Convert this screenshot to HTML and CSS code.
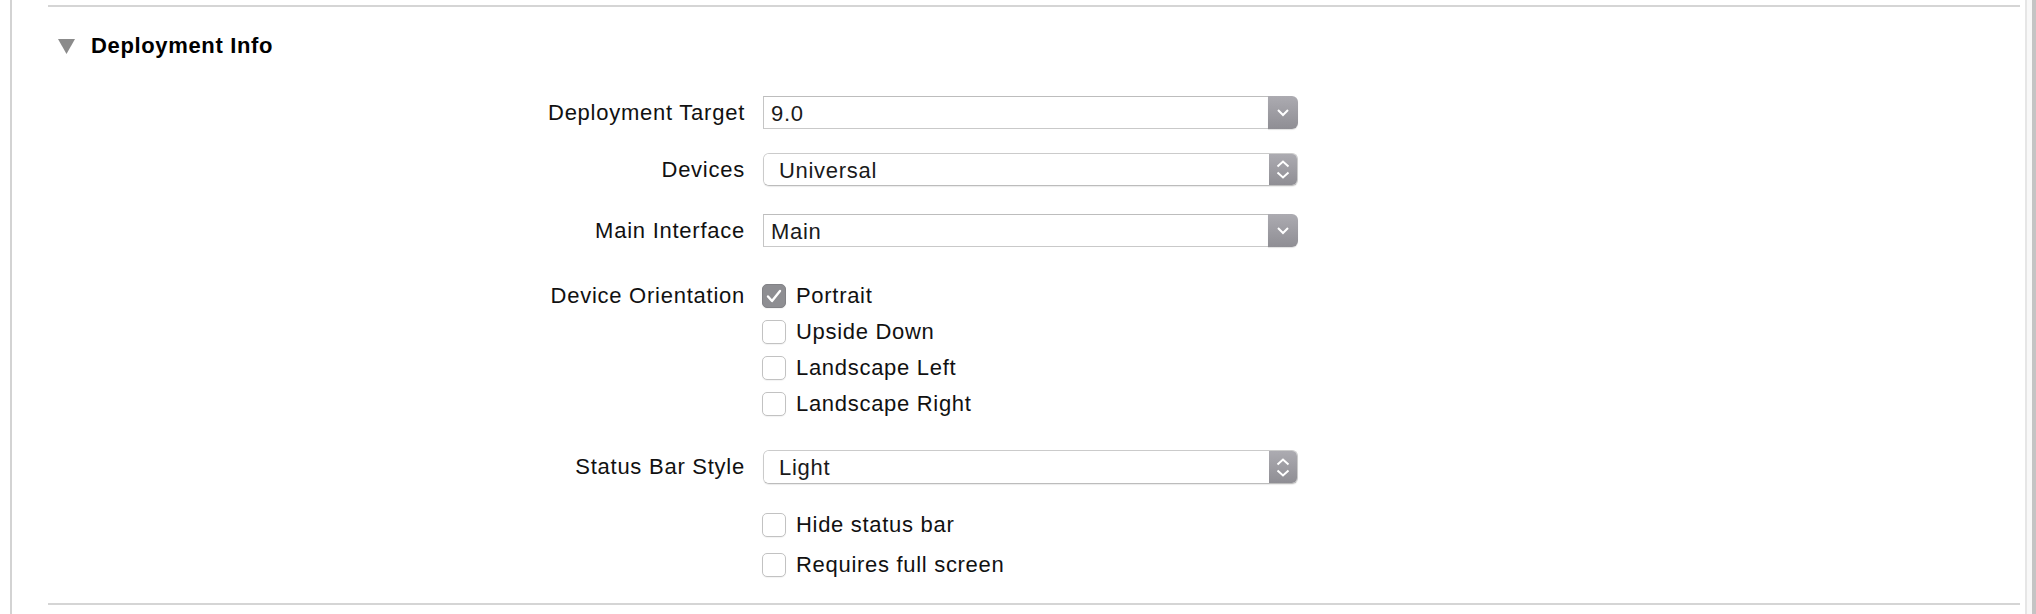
FILE: index.html
```html
<!DOCTYPE html>
<html>
<head>
<meta charset="utf-8">
<link rel="stylesheet" href="styles.css">
</head>
<body>
<div class="page">
  <div class="gutter"></div>
  <div class="main">
    <section class="section">
      <div class="rule"></div>
      <header class="head">
        <svg class="disclosure" width="17" height="15" viewBox="0 0 17 15"><polygon points="0,0 17,0 8.5,15" fill="#8b8b8b"/></svg>
        <h2 class="title">Deployment Info</h2>
      </header>

      <div class="row row-target">
        <div class="label">Deployment Target</div>
        <div class="combo">
          <div class="field">9.0</div>
          <div class="btn combo-btn">
            <svg width="12" height="8" viewBox="0 0 12 8"><polyline points="1,1 6,6 11,1" fill="none" stroke="#fff" stroke-width="2"/></svg>
          </div>
        </div>
      </div>

      <div class="row row-devices">
        <div class="label">Devices</div>
        <div class="popup">
          <div class="field">Universal</div>
          <div class="btn popup-btn">
            <svg width="14" height="19" viewBox="0 0 14 19"><polyline points="1.5,6.5 7,1.5 12.5,6.5" fill="none" stroke="#fff" stroke-width="2"/><polyline points="1.5,12.5 7,17.5 12.5,12.5" fill="none" stroke="#fff" stroke-width="2"/></svg>
          </div>
        </div>
      </div>

      <div class="row row-main">
        <div class="label">Main Interface</div>
        <div class="combo">
          <div class="field">Main</div>
          <div class="btn combo-btn">
            <svg width="12" height="8" viewBox="0 0 12 8"><polyline points="1,1 6,6 11,1" fill="none" stroke="#fff" stroke-width="2"/></svg>
          </div>
        </div>
      </div>

      <div class="row row-orient">
        <div class="label label-top">Device Orientation</div>
        <div class="checks">
          <div class="check"><span class="box checked"><svg width="16" height="14" viewBox="0 0 16 14"><polyline points="2,7.5 6,12 14,2" fill="none" stroke="#fff" stroke-width="2.4" stroke-linecap="round" stroke-linejoin="round"/></svg></span><span>Portrait</span></div>
          <div class="check"><span class="box"></span><span>Upside Down</span></div>
          <div class="check"><span class="box"></span><span>Landscape Left</span></div>
          <div class="check"><span class="box"></span><span>Landscape Right</span></div>
        </div>
      </div>

      <div class="row row-status">
        <div class="label">Status Bar Style</div>
        <div class="popup tall">
          <div class="field">Light</div>
          <div class="btn popup-btn">
            <svg width="14" height="19" viewBox="0 0 14 19"><polyline points="1.5,6.5 7,1.5 12.5,6.5" fill="none" stroke="#fff" stroke-width="2"/><polyline points="1.5,12.5 7,17.5 12.5,12.5" fill="none" stroke="#fff" stroke-width="2"/></svg>
          </div>
        </div>
      </div>

      <div class="row row-extra">
        <div class="label"></div>
        <div class="checks gap-small">
          <div class="check"><span class="box"></span><span>Hide status bar</span></div>
          <div class="check"><span class="box"></span><span>Requires full screen</span></div>
        </div>
      </div>

      <div class="rule rule-bottom"></div>
    </section>
  </div>
  <div class="scroller"></div>
</div>
</body>
</html>
```

FILE: styles.css
```css
html, body {
  margin: 0;
  padding: 0;
  background: #fff;
}

body {
  font-family: "Liberation Sans", Arial, sans-serif;
  color: #111;
}

.page {
  display: flex;
  width: 2036px;
  height: 614px;
  overflow: hidden;
}

.gutter {
  width: 10px;
  border-right: 2px solid #d3d3d3;
  flex: none;
}

.main {
  flex: 1;
  padding: 5px 5px 0 36px;
}

.scroller {
  flex: none;
  width: 5px;
  background: #f8f8f8;
  border-left: 2px solid #e6e6e6;
  border-right: 4px solid #c4c4c4;
}

.rule {
  height: 2px;
  background: #d5d5d5;
}

.head {
  display: flex;
  align-items: center;
  margin-top: 26px;
  height: 26px;
}

.disclosure {
  margin-left: 10px;
  margin-right: 16px;
  flex: none;
}

.title {
  margin: 0;
  font-size: 22px;
  line-height: 26px;
  font-weight: bold;
  letter-spacing: 0.65px;
  color: #000;
}

.row {
  display: grid;
  grid-template-columns: 697px 535px;
  column-gap: 18px;
  align-items: center;
}

.row-target { margin-top: 37px; }
.row-devices { margin-top: 24px; }
.row-main { margin-top: 28px; }
.row-orient { margin-top: 37px; align-items: start; }
.row-status { margin-top: 34px; }
.row-extra { margin-top: 29px; }
.rule-bottom { margin-top: 26px; }

.label {
  text-align: right;
  font-size: 22px;
  letter-spacing: 0.75px;
  line-height: 26px;
  color: #111;
}

.label-top {
  line-height: 24px;
}

.combo, .popup {
  display: flex;
  height: 33px;
  box-sizing: border-box;
}

.field {
  flex: 1;
  display: flex;
  align-items: center;
  font-size: 22px;
  letter-spacing: 0.7px;
  color: #1a1a1a;
  background: #fff;
  box-sizing: border-box;
  padding-top: 2px;
}

.combo .field {
  border: 1px solid #c5c5c5;
  border-top-color: #bdbdbd;
  border-bottom-color: #c9c9c9;
  border-right: none;
  padding-left: 7px;
}

.btn {
  flex: none;
  display: flex;
  align-items: center;
  justify-content: center;
  background: linear-gradient(#acabb1, #8f8e94);
}

.combo-btn {
  width: 30px;
  border-radius: 0 6px 6px 0;
  box-shadow: 0 1px 1px rgba(0, 0, 0, 0.12);
}

.popup {
  border: 1px solid #cbcbcb;
  border-bottom-color: #bcbcbc;
  border-radius: 6px;
  overflow: hidden;
  box-shadow: 0 1px 1px rgba(0, 0, 0, 0.08);
}

.popup.tall {
  height: 34px;
}

.popup .field {
  padding-left: 15px;
}

.popup-btn {
  width: 28px;
}

.checks {
  display: flex;
  flex-direction: column;
  gap: 12px;
  margin-left: -1px;
}

.checks.gap-small {
  gap: 16px;
}

.check {
  display: flex;
  align-items: center;
  gap: 10px;
  height: 24px;
  font-size: 22px;
  letter-spacing: 0.7px;
  color: #111;
}

.box {
  width: 24px;
  height: 24px;
  box-sizing: border-box;
  border: 1px solid #c2c2c2;
  border-radius: 5px;
  background: #fff;
  box-shadow: 0 1px 1px rgba(0, 0, 0, 0.05);
  display: flex;
  align-items: center;
  justify-content: center;
  flex: none;
}

.box.checked {
  background: #8e8e92;
  border-color: #828286;
}
```
